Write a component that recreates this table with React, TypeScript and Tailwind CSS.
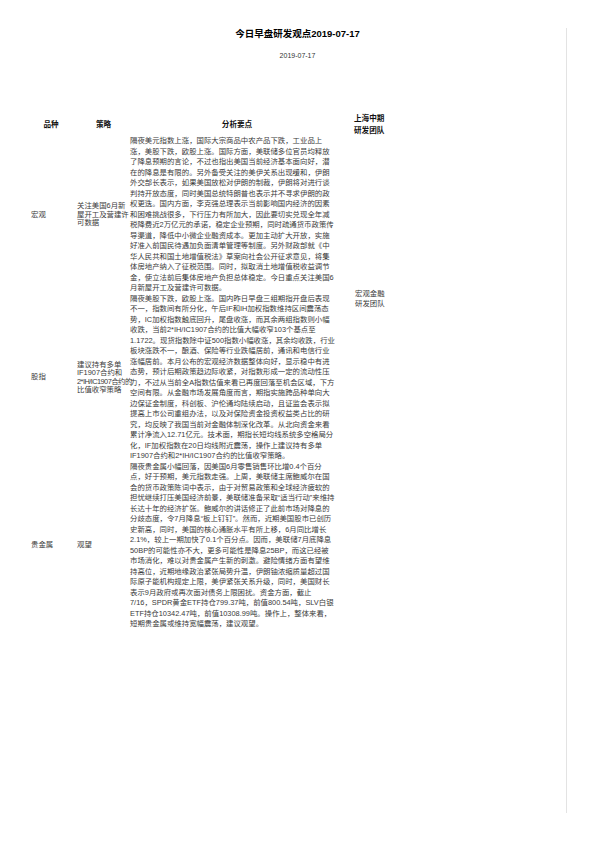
import React from "react";

const macro = [
  "隔夜美元指数上涨，国际大宗商品中农产品下跌，工业品上",
  "涨，美股下跌，欧股上涨。国际方面，美联储多位官员均释放",
  "了降息预期的言论，不过也指出美国当前经济基本面向好，潜",
  "在的降息是有限的。另外备受关注的美伊关系出现缓和，伊朗",
  "外交部长表示，如果美国放松对伊朗的制裁，伊朗将对进行谈",
  "判持开放态度，同时美国总统特朗普也表示并不寻求伊朗的政",
  "权更迭。国内方面，李克强总理表示当前影响国内经济的因素",
  "和困难挑战很多，下行压力有所加大，因此要切实兑现全年减",
  "税降费近2万亿元的承诺，稳定企业预期，同时疏通货币政策传",
  "导渠道，降低中小微企业融资成本。更加主动扩大开放，实施",
  "好准入前国民待遇加负面清单管理等制度。另外财政部就《中",
  "华人民共和国土地增值税法》草案向社会公开征求意见，将集",
  "体房地产纳入了征税范围。同时，拟取消土地增值税收益调节",
  "金，使立法前后集体房地产负担总体稳定。今日重点关注美国6",
  "月新屋开工及营建许可数据。",
];

const equity = [
  "隔夜美股下跌，欧股上涨。国内昨日早盘三组期指开盘后表现",
  "不一，指数间有所分化，午后IF和IH加权指数维持区间震荡态",
  "势，IC加权指数触底回升，尾盘收涨，而其余两组指数则小幅",
  "收跌，当前2*IH/IC1907合约的比值大幅收窄103个基点至",
  "1.1722。现货指数除中证500指数小幅收涨，其余均收跌，行业",
  "板块涨跌不一，酿酒、保险等行业跌幅居前，通讯和电信行业",
  "涨幅居前。本月公布的宏观经济数据整体向好，显示稳中有进",
  "态势，预计后期政策趋边际收紧，对指数形成一定的流动性压",
  "力，不过从当前全A指数估值来看已再度回落至机会区域，下方",
  "空间有限。从金融市场发展角度而言，期指实施跨品种单向大",
  "边保证金制度，科创板、沪伦通均陆续启动，且证监会表示拟",
  "提高上市公司重组办法，以及对保险资金投资权益类占比的研",
  "究，均反映了我国当前对金融体制深化改革。从北向资金来看",
  "累计净流入12.71亿元。技术面，期指长短均线系统多空格局分",
  "化，IF加权指数在20日均线附近震荡，操作上建议持有多单",
  "IF1907合约和2*IH/IC1907合约的比值收窄策略。",
];

const gold = [
  "隔夜贵金属小幅回落，因美国6月零售销售环比增0.4个百分",
  "点，好于预期，美元指数走强。上周，美联储主席鲍威尔在国",
  "会的货币政策陈词中表示，由于对贸易政策和全球经济疲软的",
  "担忧继续打压美国经济前景，美联储准备采取“适当行动”来维持",
  "长达十年的经济扩张。鲍威尔的讲话修正了此前市场对降息的",
  "分歧态度，令7月降息“板上钉钉”。然而，近期美国股市已创历",
  "史新高，同时，美国的核心通胀水平有所上移，6月同比增长",
  "2.1%，较上一期加快了0.1个百分点。因而，美联储7月底降息",
  "50BP的可能性亦不大，更多可能性是降息25BP，而这已经被",
  "市场消化，难以对贵金属产生新的刺激。避险情绪方面有望维",
  "持高位，近期地缘政治紧张局势升温，伊朗铀浓缩质量超过国",
  "际原子能机构规定上限，美伊紧张关系升级，同时，美国财长",
  "表示9月政府或再次面对债务上限困扰。资金方面，截止",
  "7/16，SPDR黄金ETF持仓799.37吨，前值800.54吨，SLV白银",
  "ETF持仓10342.47吨，前值10308.99吨。操作上，整体来看，",
  "短期贵金属或维持宽幅震荡，建议观望。",
];

function Lines({ lines, cls }: { lines: string[]; cls: string }) {
  return (
    <div className={cls}>
      {lines.map((l, i) => (
        <div key={i} className="whitespace-nowrap">
          {l}
        </div>
      ))}
    </div>
  );
}

export default function App() {
  const head = "text-[7.6px] font-bold leading-[11.5px] text-[#111] flex items-center justify-center";
  const side = "text-[7.4px] leading-[8.5px] text-[#3a3a3a] flex flex-col justify-center";
  const body = "text-[7.4px] leading-[10.5px] text-[#3a3a3a]";
  return (
    <div className="w-[595px] min-h-[842px] bg-white font-['Liberation_Sans','Noto_Sans_CJK_SC',sans-serif]">
      <div className="pt-[28px]">
        <div className="w-[567px] h-[785px] border-r border-[#e3e3e3]">
          <div className="pl-[29px] text-center text-[9.5px] font-bold leading-[12px] text-black">
            今日早盘研发观点2019-07-17
          </div>
          <div className="pl-[29px] mt-[11px] text-center text-[7px] leading-[10px] text-[#333]">
            2019-07-17
          </div>
          <div className="ml-[25px] mt-[52px] grid grid-cols-[52px_53px_214px_10px_32px]">
            {/* header */}
            <div className={`${head} col-start-1 row-start-1`}>品种</div>
            <div className={`${head} col-start-2 row-start-1`}>策略</div>
            <div className={`${head} col-start-3 row-start-1`}>分析要点</div>
            <div className={`${head} col-start-5 row-start-1 flex-col items-start`}>
              <div className="whitespace-nowrap">上海中期</div>
              <div className="whitespace-nowrap">研发团队</div>
            </div>

            {/* macro */}
            <div className={`${side} col-start-1 row-start-2 pl-[6px]`}>宏观</div>
            <Lines
              lines={["关注美国6月新", "屋开工及营建许", "可数据"]}
              cls={`${side} col-start-2 row-start-2`}
            />
            <Lines lines={macro} cls={`${body} col-start-3 row-start-2`} />

            {/* team, spans macro + equity */}
            <div className={`${side} col-start-5 row-start-2 row-span-2 leading-[10px] pl-[1px]`}>
              <div className="whitespace-nowrap">宏观金融</div>
              <div className="whitespace-nowrap">研发团队</div>
            </div>

            {/* equity */}
            <div className={`${side} col-start-1 row-start-3 pl-[6px]`}>股指</div>
            <div className={`${side} col-start-2 row-start-3`}>
              <div className="whitespace-nowrap">建议持有多单</div>
              <div className="whitespace-nowrap">IF1907合约和</div>
              <div className="whitespace-nowrap tracking-[-0.55px]">2*IH/IC1907合约的</div>
              <div className="whitespace-nowrap">比值收窄策略</div>
            </div>
            <Lines lines={equity} cls={`${body} col-start-3 row-start-3`} />

            {/* gold */}
            <div className={`${side} col-start-1 row-start-4 pl-[6px]`}>贵金属</div>
            <div className={`${side} col-start-2 row-start-4`}>观望</div>
            <Lines lines={gold} cls={`${body} col-start-3 row-start-4`} />
          </div>
        </div>
      </div>
    </div>
  );
}
